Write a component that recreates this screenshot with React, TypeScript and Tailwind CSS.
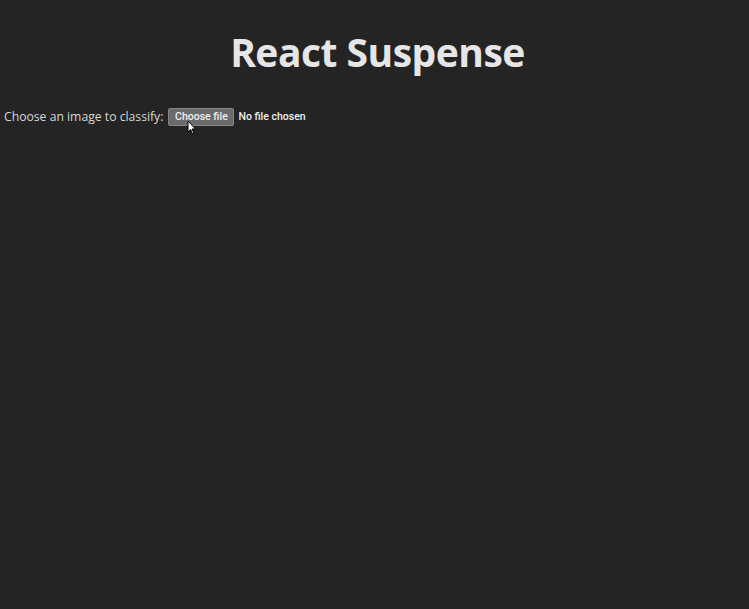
export default function App() {
  return (
    <div className="min-h-[609px] w-full bg-[#242424] text-[#e3e3e3] font-['Open_Sans',sans-serif] relative">
      <h1 className="pt-[26px] text-center text-[39px] leading-[52px] font-bold text-[#e6e6e6] tracking-[-0.5px] pl-[6px]">
        React Suspense
      </h1>
      <div className="mt-[29px] flex items-center pl-[4px] h-[20px]">
        <span className="text-[12.2px] text-[#d6d6d6]">Choose an image to classify:</span>
        <div className="ml-[5px] flex items-center font-['Roboto',sans-serif] font-medium text-[10.5px] text-[#eeeeee]">
          <span className="h-[18px] w-[66px] flex items-center justify-center rounded-[2px] bg-[#6b6b6b] border border-[#858585]">
            Choose file
          </span>
          <span className="ml-[4px]">No file chosen</span>
        </div>
      </div>
      <svg className="absolute left-[187px] top-[120px]" width="10" height="15" viewBox="0 0 10 15">
        <path d="M1 1 L1 12 L3.5 9.5 L5.5 14 L7 13.3 L5 9 L8.5 9 Z" fill="#fff" stroke="#000" strokeWidth="1" strokeLinejoin="round" />
      </svg>
    </div>
  )
}
